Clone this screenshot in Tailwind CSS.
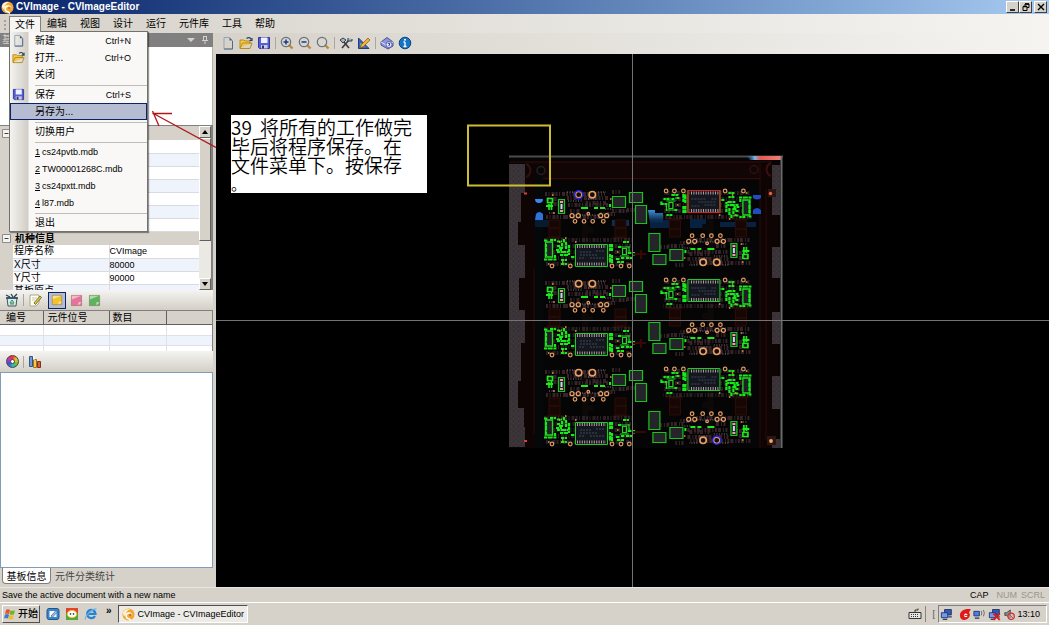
<!DOCTYPE html>
<html lang="zh-CN">
<head>
<meta charset="utf-8">
<title>CVImage - CVImageEditor</title>
<script src="https://cdn.jsdelivr.net/npm/@tailwindcss/browser@4"></script>
</head>
<body class="overflow-hidden bg-[#d6d2ca] font-['Liberation_Sans','Noto_Sans_CJK_SC',sans-serif] text-[9px] leading-3 text-black">

<!-- shared icons -->
<svg class="hidden" aria-hidden="true">
  <defs>
    <linearGradient id="gFolder" x1="0" y1="0" x2="0" y2="1"><stop offset="0" stop-color="#ffe79a"/><stop offset="1" stop-color="#e8ab25"/></linearGradient>
    <linearGradient id="gPage" x1="0" y1="0" x2="1" y2="1"><stop offset="0" stop-color="#ffffff"/><stop offset="1" stop-color="#c5d8ee"/></linearGradient>
    <radialGradient id="gLens"><stop offset="0" stop-color="#ffffff"/><stop offset="1" stop-color="#b9d6e8"/></radialGradient>
    <symbol id="new" viewBox="0 0 14 14"><path d="M3 1.500h5.500l3 3v8.500H3z" fill="url(#gPage)" stroke="#8fa4bb"/><path d="M8.500 1.500v3h3z" fill="#4a6288"/><path d="M3 13h8.500V5" fill="none" stroke="#53698a"/></symbol>
    <symbol id="open" viewBox="0 0 14 14"><path d="M1 12V4h4l1 1h5v3" fill="#f3c84e" stroke="#b98a1e"/><path d="M1 12.500l2.500-5.500H13l-2 5.500z" fill="url(#gFolder)" stroke="#b98a1e"/><path d="M7.500 2.500c2-1.500 4-1 4.500 1M13 2v2.500h-2.500" fill="none" stroke="#29435f" stroke-width="1.200"/></symbol>
    <symbol id="save" viewBox="0 0 14 14"><path d="M1.500 1.500h11v11h-10l-1-1z" fill="#5660d0" stroke="#3338a0"/><path d="M4 1.500h6.500V7H4z" fill="#eef2ff"/><path d="M4 9h6.500v3.500H4z" fill="#c8cbe6"/><path d="M5 9.500h2v3H5z" fill="#2b2f80"/></symbol>
    <symbol id="lens" viewBox="0 0 14 14"><path d="M9 9l3.500 3.500" stroke="#c38a2c" stroke-width="2.400"/><circle cx="6" cy="6" r="4.700" fill="url(#gLens)" stroke="#66727e" stroke-width="1.200"/></symbol>
    <symbol id="logo" viewBox="0 0 14 14"><circle cx="7" cy="7" r="6.500" fill="#f1a72f"/><path d="M1 5a6 6 0 0 1 8-3.500C6 2 4 4 4 7.500L2 9z" fill="#fff3d2"/><path d="M10.500 8a3 3 0 1 0-3 3.500l2 2" fill="none" stroke="#fff" stroke-width="1.700"/><circle cx="9" cy="7.500" r="1.500" fill="#d27a12"/></symbol>
    <symbol id="note" viewBox="0 0 14 14"><path d="M1.500 1.500h11v11h-11z" fill="currentColor" stroke="#6b5c40" stroke-opacity=".45"/><path d="M2 2h10L2 6z" fill="#fff" opacity=".5"/><path d="M9 12.500V9h3.500z" fill="#fff" opacity=".6"/></symbol>
    <symbol id="pcs" viewBox="0 0 14 14"><path d="M5 1.500h7.500v6H5z" fill="#3559b8" stroke="#223468"/><path d="M1.500 5h7v5.500h-7z" fill="#6f9af0" stroke="#223468"/><path d="M3 12.500h5M9 9.500h4" stroke="#333c58" stroke-width="1.400"/></symbol>
  </defs>
</svg>

<div class="flex h-screen flex-col">
  <header class="flex h-[14px] shrink-0 items-center bg-gradient-to-r from-[#0a246a] to-[#a6caf0] pr-0.5 pl-px text-white">
    <svg class="h-[13px] w-[13px]"><use href="#logo"/></svg>
    <h1 class="ml-0.5 flex-1 text-[10px] font-bold">CVImage - CVImageEditor</h1>
    <button aria-label="最小化" class="flex h-3 w-[13px] items-center justify-center border border-[#404040] border-t-white border-l-white bg-[#d6d2ca]"><svg class="h-2 w-2" viewBox="0 0 8 8"><path d="M1 7h5" stroke="#000" stroke-width="1.600"/></svg></button>
    <button aria-label="还原" class="flex h-3 w-[13px] items-center justify-center border border-[#404040] border-t-white border-l-white bg-[#d6d2ca]"><svg class="h-2 w-2" viewBox="0 0 8 8"><path d="M3 3V1h4v3.500H5M1 3.500h4v4H1z" fill="none" stroke="#000"/><path d="M3 1h4M1 3.500h4" stroke="#000" stroke-width="1.600"/></svg></button>
    <button aria-label="关闭" class="ml-0.5 flex h-3 w-[13px] items-center justify-center border border-[#404040] border-t-white border-l-white bg-[#d6d2ca]"><svg class="h-2 w-2" viewBox="0 0 8 8"><path d="M1 1l6 6M7 1L1 7" stroke="#000" stroke-width="1.400"/></svg></button>
  </header>

  <nav class="relative z-20 flex h-[19px] shrink-0 items-stretch bg-gradient-to-r from-[#d6d2ca] to-[#f5f4f1] pl-[9px] text-[10px]">
    <span class="absolute top-1.5 left-1 h-2.5 border-l-2 border-dotted border-[#a5a198]"></span>
    <div class="relative flex">
      <button class="relative z-10 mt-0.5 mb-px w-8 border border-b-0 border-[#808080] bg-[#f6f5f2]">文件</button>
      <div role="menu" class="absolute top-[17px] left-0 w-[139px] border border-[#73716c] bg-[#f9f8f6] bg-[linear-gradient(to_right,#f4f3ef,#d2cec6_18px,#f9f8f6_19px)] text-[9px] shadow-[1px_1px_1px_#00000066]">
        <button role="menuitem" class="flex h-[17px] w-full items-center pr-4 text-left"><svg class="ml-0.5 mr-2.5 h-[13px] w-[13px]"><use href="#new"/></svg><span class="flex-1 text-[10px]">新建</span><span>Ctrl+N</span></button>
        <button role="menuitem" class="flex h-[17px] w-full items-center pr-4 text-left"><svg class="ml-0.5 mr-2.5 h-[13px] w-[13px]"><use href="#open"/></svg><span class="flex-1 text-[10px]">打开...</span><span>Ctrl+O</span></button>
        <button role="menuitem" class="flex h-[17px] w-full items-center pl-[25px] text-[10px]">关闭</button>
        <div class="ml-[25px] h-[3px] border-b border-[#c0bdb5]"></div>
        <button role="menuitem" class="flex h-[17px] w-full items-center pr-4 text-left"><svg class="ml-0.5 mr-2.5 h-[13px] w-[13px]"><use href="#save"/></svg><span class="flex-1 text-[10px]">保存</span><span>Ctrl+S</span></button>
        <button role="menuitem" class="flex h-[17px] w-full items-center border border-[#0a246a] bg-[#b6bdd2] pl-6 text-[10px]">另存为...</button>
        <div class="ml-[25px] h-[3px] border-b border-[#c0bdb5]"></div>
        <button role="menuitem" class="flex h-[17px] w-full items-center pl-[25px] text-[10px]">切换用户</button>
        <div class="ml-[25px] h-[3px] border-b border-[#c0bdb5]"></div>
        <button role="menuitem" class="flex h-[17px] w-full items-center gap-0.5 pl-[25px]"><u>1</u> cs24pvtb.mdb</button>
        <button role="menuitem" class="flex h-[17px] w-full items-center gap-0.5 pl-[25px]"><u>2</u> TW00001268C.mdb</button>
        <button role="menuitem" class="flex h-[17px] w-full items-center gap-0.5 pl-[25px]"><u>3</u> cs24pxtt.mdb</button>
        <button role="menuitem" class="flex h-[17px] w-full items-center gap-0.5 pl-[25px]"><u>4</u> l87.mdb</button>
        <div class="ml-[25px] h-[3px] border-b border-[#c0bdb5]"></div>
        <button role="menuitem" class="flex h-[17px] w-full items-center pl-[25px] text-[10px]">退出</button>
      </div>
    </div>
    <div class="ml-1.5 flex items-center gap-[13px] pt-px">
      <button>编辑</button><button>视图</button><button>设计</button><button>运行</button><button>元件库</button><button>工具</button><button>帮助</button>
    </div>
  </nav>

  <main class="relative flex min-h-0 flex-1">
    <aside class="flex w-[216px] shrink-0 flex-col pr-[3px]">
      <div class="flex h-3.5 shrink-0 items-center bg-[#808080] pr-1 pl-0.5 text-[10px] text-[#d6d2ca]">
        <span class="flex-1">基板信息</span>
        <button aria-label="窗口位置"><svg class="mr-1.5 h-2 w-2" viewBox="0 0 8 8"><path d="M0 2h8L4 6z" fill="#d6d2ca"/></svg></button>
        <button aria-label="固定"><svg class="h-2 w-2" viewBox="0 0 8 8"><path d="M2.500 0v4M5.500 0v4M1 4.500h6M4 4.500V8M2.500.5h3" stroke="#d6d2ca" fill="none"/></svg></button>
      </div>
      <div class="h-[78px] shrink-0 border-r border-[#b5b2aa] bg-white"></div>

      <div class="flex h-[165px] shrink-0 overflow-hidden border-t border-r-2 border-[#808080]">
        <div class="min-w-0 flex-1">
          <table class="w-full table-fixed border-collapse text-[10px] leading-3">
            <colgroup><col class="w-[13px]"><col class="w-24"><col></colgroup>
            <tbody>
              <tr class="h-3.5"><td class="p-0"><svg class="ml-0.5 h-[9px] w-[9px]" viewBox="0 0 9 9"><path d="M.5.5h8v8h-8z" fill="#f4f3f0" stroke="#8c8c8c"/><path d="M2.500 4.500h4" stroke="#444"/></svg></td><td colspan="2" class="p-0"></td></tr>
              <tr class="h-[13px]"><td></td><td colspan="2" class="border-b border-[#d9dbe0] bg-white p-0"></td></tr>
              <tr class="h-[13px]"><td></td><td colspan="2" class="border-b border-[#d9dbe0] bg-[#eff3fb] p-0"></td></tr>
              <tr class="h-[13px]"><td></td><td colspan="2" class="border-b border-[#d9dbe0] bg-white p-0"></td></tr>
              <tr class="h-[13px]"><td></td><td colspan="2" class="border-b border-[#d9dbe0] bg-[#eff3fb] p-0"></td></tr>
              <tr class="h-[13px]"><td></td><td colspan="2" class="border-b border-[#d9dbe0] bg-white p-0"></td></tr>
              <tr class="h-[13px]"><td></td><td colspan="2" class="border-b border-[#d9dbe0] bg-[#eff3fb] p-0"></td></tr>
              <tr class="h-[13px]"><td></td><td colspan="2" class="border-b border-[#d9dbe0] bg-white p-0"></td></tr>
              <tr class="h-3.5"><td class="p-0"><svg class="ml-0.5 h-[9px] w-[9px]" viewBox="0 0 9 9"><path d="M.5.5h8v8h-8z" fill="#f4f3f0" stroke="#8c8c8c"/><path d="M2.500 4.500h4" stroke="#444"/></svg></td><th colspan="2" class="p-0 pt-px pl-0.5 text-left font-bold">机种信息</th></tr>
              <tr class="h-[13px]"><td></td><td class="border-r border-b border-[#d9dbe0] bg-white p-0 pl-px">程序名称</td><td class="border-b border-[#d9dbe0] bg-white p-0 text-[9px]">CVImage</td></tr>
              <tr class="h-[13px]"><td></td><td class="border-r border-b border-[#d9dbe0] bg-[#eff3fb] p-0 pl-px">X尺寸</td><td class="border-b border-[#d9dbe0] bg-[#eff3fb] p-0 text-[9px]">80000</td></tr>
              <tr class="h-[13px]"><td></td><td class="border-r border-b border-[#d9dbe0] bg-white p-0 pl-px">Y尺寸</td><td class="border-b border-[#d9dbe0] bg-white p-0 text-[9px]">90000</td></tr>
              <tr class="h-[13px]"><td></td><td class="border-r border-[#d9dbe0] bg-[#eff3fb] p-0 pl-px">基板原点</td><td class="bg-[#eff3fb] p-0"></td></tr>
            </tbody>
          </table>
        </div>
        <div class="flex w-3 flex-col bg-[#ebe9e4]">
          <button aria-label="向上" class="flex h-3 items-center justify-center border border-[#606060] border-t-white border-l-white bg-[#d6d2ca]"><svg class="h-1.5 w-2" viewBox="0 0 8 6"><path d="M1 5h6L4 1z"/></svg></button>
          <div class="h-[103px] border border-[#606060] border-t-white border-l-white bg-[#d6d2ca]"></div>
          <div class="flex-1"></div>
          <button aria-label="向下" class="flex h-3 items-center justify-center border border-[#606060] border-t-white border-l-white bg-[#d6d2ca]"><svg class="h-1.5 w-2" viewBox="0 0 8 6"><path d="M1 1h6L4 5z"/></svg></button>
        </div>
      </div>

      <div class="flex h-5 shrink-0 items-center gap-1 bg-gradient-to-b from-[#f5f4f1] to-[#d3cfc6] pl-[5px]">
        <button aria-label="清除"><svg class="h-3.5 w-3.5" viewBox="0 0 14 14"><path d="M2 5h10l-1 8H3z" fill="#dce8ea" stroke="#41565c"/><path d="M1 2l4 2M6 1l2 3M12 1l-3 3M1 5h12" stroke="#27445a" stroke-width="1.300"/><path d="M5 10l2-3 2 3zM5 11h4" stroke="#2a9a62" fill="none"/></svg></button>
        <span class="h-3 w-px bg-[#aaa69c]"></span>
        <button aria-label="编辑备注"><svg class="h-3.5 w-3.5" viewBox="0 0 14 14"><path d="M2 2h9v8l-3 3H2z" fill="#fffef3" stroke="#a9a58c"/><path d="M4 5h5M4 7h3" stroke="#c9c5ac"/><path d="M6 10l6-7 1.500 1.500-6 7z" fill="#e7c431" stroke="#4f5e32" stroke-width=".8"/></svg></button>
        <button aria-label="黄色标签" class="ml-0.5 flex h-[17px] w-[18px] items-center justify-center border border-[#0a246a] bg-[#b6bdd2] text-[#f3c12c]"><svg class="h-3 w-3"><use href="#note"/></svg></button>
        <button aria-label="粉色标签" class="text-[#e8729b]"><svg class="h-[13px] w-[13px]"><use href="#note"/></svg></button>
        <button aria-label="绿色标签" class="ml-px text-[#5eb45c]"><svg class="h-[13px] w-[13px]"><use href="#note"/></svg></button>
      </div>

      <div class="h-[41px] shrink-0 overflow-hidden border-t border-r border-[#808080] bg-white">
        <table class="w-full table-fixed border-collapse text-[10px] leading-3">
          <colgroup><col class="w-[43px]"><col class="w-[66px]"><col class="w-[57px]"><col></colgroup>
          <thead><tr class="h-[13px] bg-[#d6d2ca] text-left">
            <th class="border-r border-b border-[#606060] p-0 pt-px pl-1.5 font-normal">编号</th><th class="border-r border-b border-[#606060] p-0 pt-px pl-1 font-normal">元件位号</th><th class="border-r border-b border-[#606060] p-0 pt-px pl-[3px] font-normal">数目</th><th class="border-b border-[#606060] p-0"></th></tr></thead>
          <tbody>
            <tr class="h-[11px]"><td class="border-r border-b border-[#dfe1e6] p-0"></td><td class="border-r border-b border-[#dfe1e6] p-0"></td><td class="border-r border-b border-[#dfe1e6] p-0"></td><td class="border-b border-[#dfe1e6] p-0"></td></tr>
            <tr class="h-[10px] bg-[#eff3fb]"><td class="border-r border-b border-[#dfe1e6] p-0"></td><td class="border-r border-b border-[#dfe1e6] p-0"></td><td class="border-r border-b border-[#dfe1e6] p-0"></td><td class="border-b border-[#dfe1e6] p-0"></td></tr>
            <tr class="h-3"><td class="border-r border-[#dfe1e6] p-0"></td><td class="border-r border-[#dfe1e6] p-0"></td><td class="border-r border-[#dfe1e6] p-0"></td><td class="p-0"></td></tr>
          </tbody>
        </table>
      </div>

      <div class="flex h-[21px] shrink-0 items-center gap-1 bg-gradient-to-b from-[#f5f4f1] to-[#d3cfc6] pl-1.5">
        <button aria-label="颜色" class="h-[13px] w-[13px] rounded-full border border-[#444] bg-[conic-gradient(#e33,#f3c22b,#5bc436,#2bb3c9,#3a4be0,#c933b9,#e33)] p-[3px]"><span class="block h-full rounded-full border border-[#444] bg-white"></span></button>
        <span class="h-3 w-px bg-[#aaa69c]"></span>
        <button aria-label="统计图"><svg class="h-3.5 w-3.5" viewBox="0 0 14 14"><path d="M1.500 1.500h3v10h-3z" fill="#6d9ad8" stroke="#345380"/><path d="M5.500 4.500h3v8h-3z" fill="#f5cb45" stroke="#9a7420"/><path d="M9.500 6.500h3v6h-3z" fill="#df5b36" stroke="#843018"/><path d="M6 1v4" stroke="#fff"/></svg></button>
      </div>
      <div class="min-h-0 flex-1 border border-[#7f9db9] bg-white"></div>
      <div role="tablist" class="flex h-[19px] shrink-0 items-start pl-0.5 text-[10px]">
        <button role="tab" aria-selected="true" class="h-4 w-[49px] rounded-b-sm border border-t-0 border-[#808080] bg-white pt-0.5">基板信息</button>
        <button role="tab" aria-selected="false" class="h-4 px-1 pt-0.5 text-[#444]">元件分类统计</button>
      </div>
    </aside>

    <section class="flex min-w-0 flex-1 flex-col">
      <div role="toolbar" class="flex h-[21px] shrink-0 items-center gap-1 bg-gradient-to-r from-[#d6d2ca] to-[#f5f4f1] pb-0.5 pl-[5px]">
        <button aria-label="新建"><svg class="h-3.5 w-3.5"><use href="#new"/></svg></button>
        <button aria-label="打开"><svg class="h-3.5 w-3.5"><use href="#open"/></svg></button>
        <button aria-label="保存"><svg class="h-3.5 w-3.5"><use href="#save"/></svg></button>
        <span class="h-3 w-px bg-[#aaa69c]"></span>
        <button aria-label="放大"><svg class="h-3.5 w-3.5" viewBox="0 0 14 14"><use href="#lens"/><path d="M3.500 6h5M6 3.500v5" stroke="#163a8c" stroke-width="1.500"/></svg></button>
        <button aria-label="缩小"><svg class="h-3.5 w-3.5" viewBox="0 0 14 14"><use href="#lens"/><path d="M3.500 6h5" stroke="#163a8c" stroke-width="1.500"/></svg></button>
        <button aria-label="缩放"><svg class="h-3.5 w-3.5"><use href="#lens"/></svg></button>
        <span class="h-3 w-px bg-[#aaa69c]"></span>
        <button aria-label="设置"><svg class="h-3.5 w-3.5" viewBox="0 0 14 14"><path d="M3 12l7-8M10 12L4 5" stroke="#3e3e3e" stroke-width="1.700"/><path d="M1 4l3-2 3 2-3 3zM9 2v3h4V3" fill="#a6b4c0" stroke="#35404a"/></svg></button>
        <button aria-label="测量"><svg class="h-3.5 w-3.5" viewBox="0 0 14 14"><path d="M1.500 2v10.500H12z" fill="#3d63b8" stroke="#243c78"/><path d="M3.500 7v3.500H8z" fill="#d6d2ca"/><path d="M4 9l7-7 2 2-7 7-2.500.5z" fill="#f1b62d" stroke="#8a5e14" stroke-width=".8"/></svg></button>
        <span class="h-3 w-px bg-[#aaa69c]"></span>
        <button aria-label="帮助"><svg class="h-3.5 w-3.5" viewBox="0 0 14 14"><path d="M1 6l6-4.500L13 6v4l-5 3-7-4z" fill="#8d95d8" stroke="#4a5294"/><path d="M1 6l6 3.500L13 6" fill="none" stroke="#dfe2ff"/><circle cx="9" cy="8.500" r="3" fill="#e8ebff" stroke="#5a66b8"/><path d="M8 8c0-1.300 2-1.300 2 0L9 9v1" fill="none" stroke="#26347e"/></svg></button>
        <button aria-label="关于"><svg class="h-3.5 w-3.5" viewBox="0 0 14 14"><circle cx="7" cy="7" r="5.800" fill="#1773c4" stroke="#0b4582"/><path d="M7 6v4.500M5.500 6H7M5.500 10.500h3" stroke="#fff" stroke-width="1.300"/><circle cx="7" cy="3.700" r="1" fill="#fff"/></svg></button>
      </div>

      <div class="relative min-h-0 flex-1 overflow-hidden bg-black">
        <svg class="absolute inset-0 h-full w-full" viewBox="216 54 833 533" role="img" aria-label="基板图像">
          <defs>
            <!-- connector module -->
            <g id="modA">
              <path d="M545 194h60M547 199h10M567 198h42M546 217h20M568 205h40M570 211h10M586 203h20M566 217h40M600 214h16M612 192h8M612 211h16M547 204h12M627 210h8" stroke="#4b3238" stroke-width="4" stroke-dasharray="2 1.500 1 2 3 1" opacity=".7"/>
              <path d="M568 201h14M588 199h8M572 215h30M549 213h7M605 209h8M567 192h8M598 192h8" stroke="#8d7680" stroke-dasharray="1 1.500"/>
              <g fill="#24242a" stroke="#18c41c" stroke-width="1.200">
                <path d="M612.500 196.500h13v11h-13zM629.500 192.500h13v10h-13zM635.500 205.500h11v18h-11z"/>
                <path d="M558.500 199.500h6v14h-6z"/>
              </g>
              <path d="M561.500 201v2M561.500 210v2" stroke="#e3a0a0" stroke-width="3"/><path d="M561.500 204v5" stroke="#c8ddda" stroke-width="2"/>
              <path d="M547.500 198.500h5v4h-5zM549 204v6M551.500 203v7" fill="none" stroke="#1fe51f" stroke-width="1.700"/>
              <path d="M546 206h7M581 208h7M594 208h4M600 208h5M610 204v3" stroke="#19ee19" stroke-width="2"/>
              <g fill="#160c08" stroke="#e5a168" stroke-width="1.600">
                <circle cx="578.700" cy="194.700" r="3.200"/><circle cx="592.300" cy="194.700" r="3.200"/>
                <g stroke-width="1.200"><circle cx="572" cy="215.700" r="2"/><circle cx="578.300" cy="215.700" r="2"/><circle cx="600.700" cy="215.700" r="2"/><circle cx="606.700" cy="215.700" r="2"/><circle cx="575" cy="221.300" r="1.800"/><circle cx="584" cy="221.300" r="1.800"/><circle cx="592.700" cy="221.300" r="1.800"/><circle cx="603.300" cy="221.300" r="1.800"/><circle cx="588.300" cy="213.700" r="1.300"/></g>
              </g>
              <path d="M552 195h1.500M553 213h1.500M610 199h1.500" stroke="#f08c4a" stroke-width="1.500"/>
            </g>
            <!-- chip module -->
            <g id="modB">
              <path d="M544 240h88M545 246h30M546 252h29M544 258h30M546 264h30M608 246h24M608 252h24M608 258h25M609 264h22" stroke="#3d2b30" stroke-width="4" stroke-dasharray="2 1.500 1 2 3 1" opacity=".7"/>
              <path d="M575.500 244.500h32v22h-32z" fill="#14171e" stroke="#1ccc20"/>
              <path d="M577 246.500h29M577 264h29" stroke="#b49aa4" stroke-width="3" stroke-dasharray="1 1.400"/>
              <path d="M580 252h12M580 255h18M596 251h8M590 258h14M579 258h6" stroke="#3d4a5c" stroke-dasharray="2 1"/>
              <path d="M545.500 242h7v15h-7z" fill="#1f1f25" stroke="#20dd20" stroke-width="1.300"/>
              <path d="M544 240.500h4M550 240h6M544 259.500h13M546 244v12M557 241.500h5M557 246h3v3M562 243v6M566 242v7M557 252h10M560 255h8M556 250h6M563 252h5M569 245v5M561 260h6M561 264h6M569 249v6M571 257h4M555 255v5M564 239v4M610 244v7M612 244v7M610 254v9M612 255v8M616 259h4M621 258h4M626 258h6M617 262h7M628 253h5M618 247h3M623 242h6M634 252v4" fill="none" stroke="#17ea1b" stroke-width="2.200" stroke-dasharray="3 .6 5 .8"/>
              <path d="M622.500 248.500h4v6h-4zM620 247h9M620 256h9M629 246v7" fill="none" stroke="#20d624" stroke-width="1.200"/>
              <g fill="#160c08" stroke="#d99a68" stroke-width="1.200"><circle cx="552" cy="266" r="1.800"/><circle cx="570.300" cy="266" r="1.800"/><circle cx="612" cy="266" r="1.800"/><circle cx="621" cy="266" r="1.800"/><circle cx="629.300" cy="266" r="1.800"/></g>
              <path d="M559 242h1.500M565 238h1.500M575 242h1.500M617 252h1.500M548 264h1.500M562 262h1.500" stroke="#f09a52" stroke-width="1.500"/>
            </g>
            <!-- brackets between modules -->
            <g id="bracket">
              <path d="M549 220h11v17h-11zM615 220h11v17h-11z" fill="#160604" stroke="#300d09"/>
              <path d="M546 238h18M612 238h18M549 228h10M616 228h10" stroke="#34100b"/>
              <path d="M585 192v52M583 230h10" stroke="#0d0909" stroke-width="6"/>
            </g>
            <g id="half">
              <use href="#bracket"/><use href="#bracket" y="89"/><use href="#bracket" y="178"/>
              <use href="#modA"/><use href="#modA" y="89"/><use href="#modA" y="178"/>
              <use href="#modB"/><use href="#modB" y="89"/><use href="#modB" y="178"/>
            </g>
            <linearGradient id="gBlue" x1="0" y1="0" x2="0" y2="1"><stop offset="0" stop-color="#3d8ee0"/><stop offset="1" stop-color="#03101e"/></linearGradient>
            <linearGradient id="gTop"><stop offset="0" stop-color="#2a5a8a" stop-opacity="0"/><stop offset=".25" stop-color="#78b7e8"/><stop offset=".4" stop-color="#e05a52"/><stop offset="1" stop-color="#f08078"/></linearGradient>
            <pattern id="grain" width="5" height="5" patternUnits="userSpaceOnUse"><path d="M0 0h5v5H0z" fill="#393237"/><path d="M1 1h1v1H1zM3 3h1v1H3z" fill="#453c41"/><path d="M3 1h1v1H3z" fill="#2f292d"/></pattern>
          </defs>

          <path d="M509 156h273v292H509z" fill="#050506"/>
          <path d="M525 161h236v19H525z" fill="#120505"/>
          <path d="M510 162h262M526 178.500h235" stroke="#300c0b"/>
          <path d="M518 164h17v284h-17zM760 164h18v284h-18z" fill="#0f0404"/>
          <path d="M760 164v284M534 268v166M766 190v250" stroke="#2b0a08"/>
          <path d="M535 164h8v284h-8z" fill="#040809"/>
          <path d="M509 164h16v29h-4v29h-3v23h7v33h-6v32h6v33h-4v38h-3v27h6v19h1v20h-16z" fill="url(#grain)"/>
          <path d="M772 165h8v50h-8zM772 247h8v31h-8zM772 312h8v32h-8zM772 376h8v33h-8zM772 439h8v9h-8z" fill="url(#grain)"/>
          <circle cx="541" cy="170.500" r="4" fill="none" stroke="#2e1c1c" stroke-width="1.500"/><path d="M526 164a7 7 0 0 1 0 13" fill="none" stroke="#2e1410" stroke-width="2"/>
          <circle cx="754" cy="169.500" r="4" fill="none" stroke="#301010" stroke-width="1.500"/><path d="M771 163a7 7 0 0 0 0 13" fill="none" stroke="#3d0e0a" stroke-width="2"/>

          <!-- blue reflections along the first row -->
          <g>
            <path d="M535 199h8q0 4-4 4t-4-4z" fill="#3b86f0"/><path d="M536 214q3-4 7 0v6h-8z" fill="#2d73d8"/><path d="M535 220h25v7h-25z" fill="#07294a" opacity=".6"/>
            <path d="M612 220h17v6h-17z" fill="#0a3c6c" opacity=".8"/>
            <path d="M648 210h7v3h8v10h-13z" fill="url(#gBlue)"/><path d="M650 220h23v8h-23zM690 219h16v9h-16zM720 222h36v5h-36z" fill="#093360" opacity=".65"/>
            <path d="M753 195h8v3q-4 3-8 0zM753 214v-4q4-4 8 0v4z" fill="#1c4ec0"/>
          </g>

          <use href="#half"/>
          <use href="#half" transform="rotate(180 647.700 317.500)"/>
          <path d="M688 190.500h32v22h-32z" fill="none" stroke="#d02020" stroke-width="1.200"/>
          <circle cx="578.700" cy="194.700" r="4" fill="none" stroke="#2020f0" stroke-width="1.400"/>
          <circle cx="716.700" cy="440.300" r="4" fill="none" stroke="#2020f0" stroke-width="1.400"/>
          <path d="M632 254h14M641 250v9M632 343h14M641 339v9M632 432h14" stroke="#3a0705" stroke-width="2"/>
          <path d="M524 193.500h3M524 441h3" stroke="#d0462c" stroke-width="2"/>
          <path d="M768 189h8v8h-8zM767 436h9v9h-9z" fill="#2a1613"/>
          <circle cx="770.500" cy="193.500" r="1.700" fill="#f0603a"/><circle cx="771" cy="441" r="1.900" fill="#ffa468"/>

          <path d="M509 156.500h274" stroke="#4c4c4c" stroke-width="2"/>
          <path d="M746 156h35v4h-31z" fill="url(#gTop)"/>
          <path d="M781.500 156v292" stroke="#6a6a6a" stroke-width="2"/>

          <path d="M632.500 54v533M216 320.500h833" stroke="#737373"/>
          <path d="M468 125.500h82v60h-82z" fill="none" stroke="#cdbd32" stroke-width="2"/>
        </svg>
        <div class="absolute top-[61px] left-[15px] h-[78px] w-[196px] bg-white pt-0.5 font-['Noto_Sans_CJK_SC',sans-serif] text-[19px] leading-[19px] font-[350] whitespace-nowrap">
          <p><span class="mr-1">39 </span>将所有的工作做完</p>
          <p>毕后将程序保存。在</p>
          <p>文件菜单下。按保存</p>
          <p class="text-[15px]">。</p>
        </div>
      </div>
    </section>

    <!-- red annotation arrow -->
    <svg class="absolute top-[75px] left-[150px] z-30 h-10 w-[66px]" viewBox="150 108 66 40" fill="none"><path d="M152.500 113l63.500 34.500M152.500 113.500h19.500M152.500 111l6.500 15" stroke="#b01818" stroke-width="1.300"/></svg>
  </main>

  <footer class="flex h-[15px] shrink-0 items-center border-t border-[#e9e6e0] pr-1 pl-0.5">
    <span class="flex-1">Save the active document with a new name</span>
    <span class="mr-2">CAP</span><span class="mr-1 text-[#9a968d]">NUM</span><span class="text-[#9a968d]">SCRL</span>
  </footer>

  <div class="flex h-[23px] shrink-0 items-center border-t border-white pr-0.5 pl-0.5">
    <button class="flex h-[18px] w-[38px] items-center gap-0.5 border border-[#505050] border-t-white border-l-white pl-px text-[10px] font-medium">
      <svg class="h-3 w-3" viewBox="0 0 12 12"><path d="M2 2q2-1.500 4 0L5 6Q3 5 1 6z" fill="#e8532b"/><path d="M6.500 2.300q2 1 4.500 0L10 6.300q-2 1-4.500 0z" fill="#6cb52d"/><path d="M1 6.700q2-1.200 4 0L4 10.500q-2-1-4 0z" fill="#3a78d8"/><path d="M5.500 7q2 1 4.300 0l-1 4q-2 1-4.300 0z" fill="#f3bd22"/></svg>开始</button>
    <div class="ml-1.5 flex items-center gap-[5px]">
      <button aria-label="显示桌面"><svg class="h-3.5 w-3.5" viewBox="0 0 14 14"><rect x="1" y="1.500" width="12" height="11" rx="2" fill="#3b86c8" stroke="#1d568e"/><path d="M3.500 4h7v6h-7z" fill="#fff"/><path d="M5 9l5-5.500 1.500 1.500-5 5z" fill="#9fc4e8" stroke="#285c90" stroke-width=".7"/></svg></button>
      <button aria-label="图片查看"><svg class="h-3.5 w-3.5" viewBox="0 0 14 14"><path d="M1 1h12v5H1z" fill="#e0442c"/><path d="M1 6h12v7H1z" fill="#4fa838"/><ellipse cx="7" cy="7" rx="4.500" ry="3.500" fill="#fff" stroke="#f0c43c"/><circle cx="5.500" cy="7" r=".8"/><circle cx="8.500" cy="7" r=".8"/></svg></button>
      <button aria-label="浏览器"><svg class="h-3.5 w-3.5" viewBox="0 0 14 14"><path d="M11 9a4.200 4.200 0 1 1 .5-2.200H4" fill="none" stroke="#2a83d0" stroke-width="2.200"/><path d="M1.500 12.500C0 10 8 1.500 12.500 2" fill="none" stroke="#6bb5ea" stroke-width="1.200"/></svg></button>
    </div>
    <button aria-label="更多" class="ml-2 pb-1.5 text-[10px] font-bold">»</button>
    <button class="ml-1.5 flex h-[18px] w-[130px] items-center gap-[3px] border border-white border-t-[#505050] border-l-[#505050] bg-[#edebe7] pl-[3px]"><svg class="h-[13px] w-[13px]"><use href="#logo"/></svg>CVImage - CVImageEditor</button>
    <div class="flex-1"></div>
    <button aria-label="键盘"><svg class="h-3.5 w-3.5" viewBox="0 0 14 14"><path d="M1 5.500h12v6H1z" fill="#e8e6e0" stroke="#333"/><path d="M3 7.500h8M3 9.500h8" stroke="#333" stroke-dasharray="1 1"/><path d="M7 5V3h3V1.500" fill="none" stroke="#333"/></svg></button>
    <span class="mx-[3px] h-4 w-px bg-[#8a867c]"></span>
    <span class="mx-[3px] text-[#555]">[</span>
    <div class="flex h-[18px] w-[109px] items-center gap-0.5 border border-white border-t-[#808080] border-l-[#808080] pr-1.5 pl-px">
      <svg class="h-[13px] w-[13px]"><use href="#pcs"/></svg>
      <svg class="ml-1 h-[13px] w-[13px]" viewBox="0 0 14 14"><path d="M13 1C6 0 1 3 1 8s5 6 8 4 4-5 2-7" fill="#e01818"/><circle cx="7.500" cy="8" r="2" fill="#fff"/><path d="M6 8h4" stroke="#e01818"/></svg>
      <svg class="h-[13px] w-[13px]" viewBox="0 0 14 14"><path d="M1 3.500h6v5H1z" fill="#4f7fe0" stroke="#223468"/><path d="M2 11h5" stroke="#333c58" stroke-width="1.500"/><path d="M9 3q1.500 2.500 0 5M11.500 2q2 3.500 0 7" fill="none" stroke="#666"/></svg>
      <svg class="h-[13px] w-[13px]" viewBox="0 0 14 14"><use href="#pcs"/><path d="M6 6l7 7M13 6l-7 7" stroke="#e01818" stroke-width="2"/></svg>
      <svg class="h-[13px] w-[13px]" viewBox="0 0 14 14"><path d="M2 5h2l4-3v9L4 8H2z" fill="#8e8e8e" stroke="#444"/><circle cx="9" cy="9" r="3.500" fill="#bbb" fill-opacity=".6" stroke="#d03030" stroke-width="1.300"/><path d="M6.500 6.500l5 5" stroke="#d03030"/></svg>
      <time class="ml-auto">13:10</time>
    </div>
  </div>
</div>
</body>
</html>
